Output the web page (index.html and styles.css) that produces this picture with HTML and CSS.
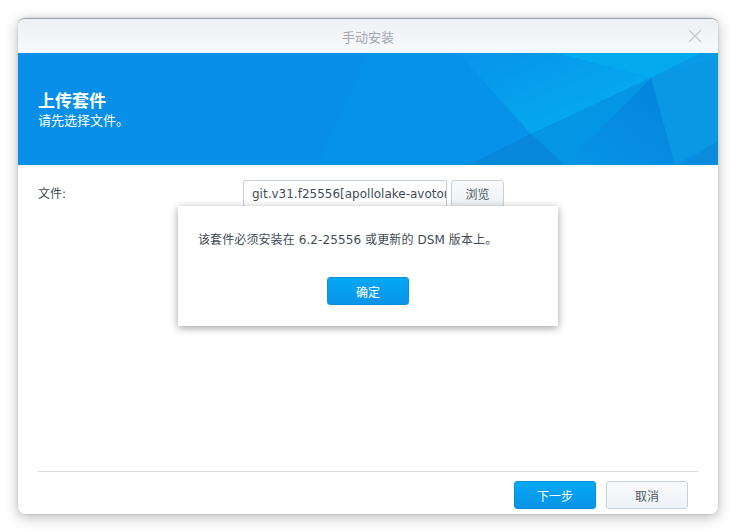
FILE: index.html
```html
<!DOCTYPE html>
<html lang="zh-CN">
<head>
<meta charset="utf-8">
<title>手动安装</title>
<link rel="stylesheet" href="styles.css">
</head>
<body>
<div class="window">
  <div class="titlebar">
    <span class="title">手动安装</span>
    <svg class="close" width="14" height="14" viewBox="0 0 14 14"><path d="M1 1 L13 13 M13 1 L1 13" stroke="#c3c8cf" stroke-width="1.3" fill="none"/></svg>
  </div>
  <div class="banner">
    <svg class="facets" width="700" height="112" viewBox="0 0 700 112" preserveAspectRatio="none">
      <defs>
        <linearGradient id="g1" x1="0" y1="0" x2="1" y2="1">
          <stop offset="0" stop-color="#0992ea"/>
          <stop offset="1" stop-color="#02b2f0"/>
        </linearGradient>
        <linearGradient id="g3" x1="1" y1="0" x2="0" y2="1">
          <stop offset="0" stop-color="#0383db"/>
          <stop offset="1" stop-color="#0895e6"/>
        </linearGradient>
      </defs>
      <rect width="700" height="112" fill="#078fe9"/>
      <polygon points="350,0 440,0 513,81 450,112 300,112" fill="#0792ea"/>
      <polygon points="440,0 537,0 633,25 513,81" fill="url(#g1)"/>
      <polygon points="537,0 683,0 633,25" fill="#03aaee"/>
      <polygon points="683,0 700,0 700,4 633,25" fill="#079be8"/>
      <polygon points="633,25 700,4 700,88 657,112" fill="#0a98e5"/>
      <polygon points="633,25 657,112 547,112" fill="url(#g3)"/>
      <polygon points="633,25 547,112 513,81" fill="#0496e4"/>
      <polygon points="513,81 547,112 450,112" fill="#0788da"/>
      <polygon points="700,88 700,112 663,112" fill="#0a8bdc"/>
    </svg>
    <div class="banner-text">
      <div class="banner-title">上传套件</div>
      <div class="banner-sub">请先选择文件。</div>
    </div>
  </div>
  <div class="content">
    <div class="row">
      <span class="label">文件:</span>
      <input class="input" type="text" readonly value="git.v31.f25556[apollolake-avoton].spk">
      <button class="btn btn-gray browse">浏览</button>
    </div>
    <div class="dialog">
      <p class="dialog-msg">该套件必须安装在 6.2-25556 或更新的 DSM 版本上。</p>
      <div class="dialog-actions">
        <button class="btn btn-blue">确定</button>
      </div>
    </div>
  </div>
  <div class="footer">
    <button class="btn btn-blue">下一步</button>
    <button class="btn btn-gray">取消</button>
  </div>
</div>
</body>
</html>
```
FILE: styles.css
```css
* { box-sizing: border-box; }
html, body { margin: 0; padding: 0; background: #ffffff; }
body {
  width: 736px;
  height: 532px;
  padding: 18px 0 0 18px;
  font-family: "DejaVu Sans", "Noto Sans CJK SC", sans-serif;
  overflow: hidden;
}
.window {
  width: 700px;
  height: 496px;
  background: #fff;
  border-radius: 7px;
  box-shadow: 0 3px 14px rgba(0,0,0,0.28), 0 0 3px rgba(0,0,0,0.12);
  display: flex;
  flex-direction: column;
  overflow: hidden;
  border-top: 1px solid #96a0ab;
}
.titlebar {
  height: 34px;
  flex: none;
  display: flex;
  align-items: center;
  justify-content: center;
  position: relative;
  background: linear-gradient(#edf0f4, #f8f9fb);
}
.title {
  font-family: "Noto Sans CJK SC", sans-serif;
  font-size: 13px;
  color: #a3a9b1;
}
.close {
  position: absolute;
  right: 16px;
  top: 10px;
}
.banner {
  height: 112px;
  flex: none;
  position: relative;
  background: #078fe9;
  display: flex;
  align-items: center;
}
.facets {
  position: absolute;
  left: 0;
  top: 0;
}
.banner-text {
  position: relative;
  padding-left: 20px;
  padding-top: 0;
  color: #fff;
  font-family: "Noto Sans CJK SC", sans-serif;
}
.banner-title {
  font-size: 17px;
  font-weight: bold;
  line-height: 22px;
}
.banner-sub {
  font-size: 13px;
  line-height: 18px;
}
.content {
  flex: 1;
  position: relative;
  padding: 15px 20px 0 20px;
}
.row {
  display: flex;
  align-items: center;
  height: 27px;
}
.label {
  width: 205px;
  font-size: 12px;
  color: #414b55;
  position: relative;
  top: -1px;
}
.input {
  width: 204px;
  height: 27px;
  margin: 0;
  border: 1px solid #c5cfd9;
  border-radius: 2px;
  font-family: "DejaVu Sans", sans-serif;
  font-size: 12px;
  color: #414b55;
  padding: 0 0 0 8px;
  outline: none;
  background: #fff;
}
.btn {
  height: 28px;
  width: 82px;
  border-radius: 3px;
  font-family: "Noto Sans CJK SC", sans-serif;
  font-size: 12px;
  padding: 0;
  cursor: pointer;
}
.btn-blue {
  border: 1px solid #0a8ee0;
  background: linear-gradient(#03a9f5, #0a93e8);
  color: #fff;
}
.btn-gray {
  border: 1px solid #c7d1dc;
  background: linear-gradient(#f8f9fb, #eef2f6);
  color: #505a64;
}
.browse {
  width: 53px;
  height: 27px;
  margin-left: 4px;
}
.dialog {
  position: absolute;
  left: 160px;
  top: 41px;
  width: 380px;
  height: 120px;
  background: #fff;
  box-shadow: 0 2px 8px rgba(0,0,0,0.38);
  padding: 25px 20px 0 20px;
}
.dialog-msg {
  margin: 0;
  font-size: 12px;
  letter-spacing: 0.1px;
  color: #414b55;
  line-height: 18px;
}
.dialog-actions {
  display: flex;
  justify-content: center;
  margin-top: 28px;
}
.footer {
  flex: none;
  margin: 0 20px;
  border-top: 1px solid #d8dde2;
  height: 43px;
  display: flex;
  justify-content: flex-end;
  gap: 10px;
  padding: 9px 10px 0 0;
}
```
